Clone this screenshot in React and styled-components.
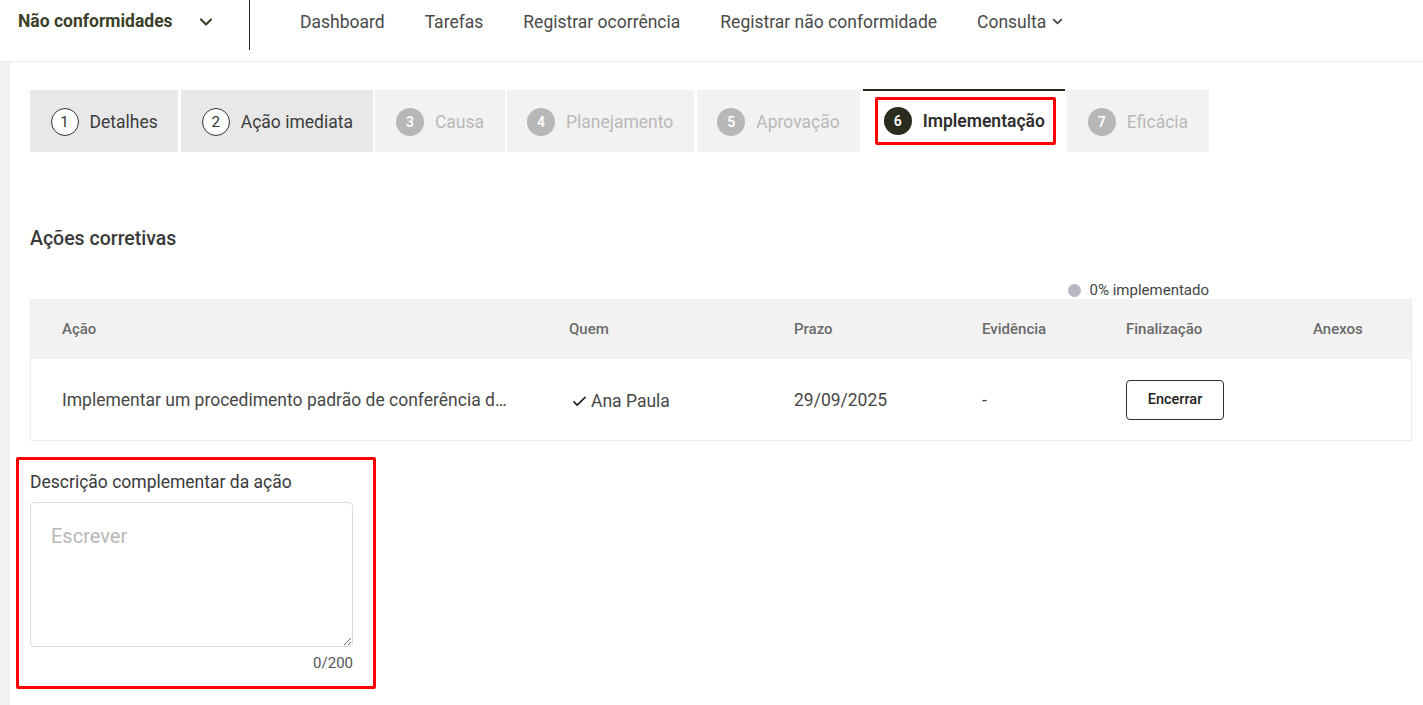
import React from 'react'
import styled, { createGlobalStyle } from 'styled-components'

const GlobalStyle = createGlobalStyle`
    * { box-sizing: border-box; }
    body {
        margin: 0;
        font-family: Roboto, "Liberation Sans", sans-serif;
        background: #ffffff;
        color: #444;
    }
`

const Header = styled.header`
    height: 62px;
    display: flex;
    align-items: flex-start;
    border-bottom: 1px solid #ededed;
    background: #fff;
`

const Module = styled.div`
    width: 250px;
    height: 50px;
    display: flex;
    align-items: flex-start;
    justify-content: space-between;
    padding: 11px 33px 0 18px;
    border-right: 1px solid #222;
    font-size: 17.5px;
    font-weight: 700;
    color: #3b4128;

    svg { margin-top: 1px; }
`

const Nav = styled.nav`
    display: flex;
    align-items: center;
    height: 43px;
    gap: 40px;
    padding-left: 50px;
`

const NavItem = styled.a`
    font-size: 17.5px;
    color: #4a4a4a;
    display: flex;
    align-items: center;
    gap: 4px;
`

const Body = styled.div`
    display: flex;
    min-height: 643px;
`

const Strip = styled.div`
    width: 10px;
    background: #f1f1f1;
`

const Main = styled.main`
    flex: 1;
    padding: 28px 11px 0 20px;
`

const Steps = styled.div`
    display: flex;
    gap: 2px;
`

const Step = styled.div`
    position: relative;
    height: 62px;
    display: flex;
    align-items: center;
    gap: 11px;
    padding: 1px 20.5px 0;
    margin-right: ${p => p.$wide ? '1px' : '0'};
    background: ${p => p.$active ? '#fff' : p.$done ? '#e8e8e8' : '#f2f2f2'};
    box-shadow: ${p => p.$active ? 'inset 0 2px 0 #262a1c' : 'none'};
    margin-top: ${p => p.$active ? '-1px' : '0'};
    font-size: 17.5px;
    font-weight: ${p => p.$active ? 600 : 400};
    color: ${p => p.$active ? '#2e2e2e' : p.$done ? '#3c3c3c' : '#b9b9b9'};

    &::after {
        content: '';
        display: ${p => p.$active ? 'block' : 'none'};
        position: absolute;
        top: 8px;
        bottom: 6px;
        left: 12px;
        right: 9px;
        border: 3px solid #f00;
        border-radius: 2px;
    }
`

const Circle = styled.span`
    width: 28px;
    height: 28px;
    flex: none;
    border-radius: 50%;
    display: flex;
    align-items: center;
    justify-content: center;
    font-size: ${p => p.$done ? '15px' : '14px'};
    font-weight: ${p => p.$done ? 400 : 600};
    border: ${p => p.$done ? '1px solid #333' : 'none'};
    background: ${p => p.$active ? '#2a2c1e' : p.$done ? '#fff' : '#b7b7b7'};
    color: ${p => p.$done ? '#333' : '#fff'};
`

const SectionTitle = styled.h2`
    margin: 75px 0 0;
    font-size: 19.5px;
    font-weight: 500;
    color: #3a3a3a;
`

const Progress = styled.div`
    display: flex;
    align-items: center;
    gap: 9px;
    width: 1179px;
    justify-content: flex-end;
    margin-top: 32px;
    font-size: 15px;
    color: #444;
    line-height: 17px;
`

const Dot = styled.span`
    width: 13px;
    height: 13px;
    border-radius: 50%;
    background: #b9bac1;
`

const Table = styled.div`
    border: 1px solid #ececec;
    border-top: none;
`

const Row = styled.div`
    display: grid;
    grid-template-columns: 507px 225px 188px 144px 187px 1fr;
    align-items: center;
    padding-left: 31px;
    height: ${p => p.$head ? '60px' : '81px'};
    background: ${p => p.$head ? '#f2f2f2' : '#fff'};
    font-size: ${p => p.$head ? '15px' : '17.5px'};
    font-weight: ${p => p.$head ? 500 : 400};
    color: ${p => p.$head ? '#6a6a6a' : '#474747'};
`

const Cell = styled.div`
    display: flex;
    align-items: center;
    gap: 4px;
    white-space: nowrap;
    padding-top: ${p => p.$low ? '3px' : '0'};

    svg { margin-left: 3px; flex: none; }
`

const Clip = styled.span`
    display: block;
    max-width: 448px;
    overflow: hidden;
    text-overflow: ellipsis;
`

const Button = styled.button`
    width: 98px;
    height: 40px;
    border: 1px solid #2d2d2d;
    border-radius: 4px;
    background: #fff;
    font-family: inherit;
    font-size: 14.5px;
    font-weight: 500;
    color: #222;
`

const Field = styled.section`
    width: 360px;
    margin: 16px 0 0 -14px;
    padding: 12px 20px 14px 11px;
    border: 3px solid #f00;
    border-radius: 2px;
`

const Label = styled.label`
    display: block;
    font-size: 17.5px;
    color: #3a3a3a;
    margin-bottom: 10px;
`

const TextArea = styled.textarea`
    display: block;
    width: 323px;
    height: 145px;
    border: 1px solid #dcdcdc;
    border-radius: 4px;
    padding: 21px 20px;
    font-family: inherit;
    font-size: 20px;
    color: #333;
    resize: vertical;
    &::placeholder { color: #b8b8b8; }
`

const Counter = styled.div`
    width: 323px;
    text-align: right;
    margin-top: 7px;
    font-size: 15px;
    color: #555;
`

const Chevron = ({ size = 16, width = 2.4 }) => (
    <svg width={size} height={size} viewBox="0 0 24 24" fill="none" stroke="currentColor" strokeWidth={width} strokeLinecap="round" strokeLinejoin="round">
        <path d="M6 9l6 6 6-6" />
    </svg>
)

const Tick = () => (
    <svg width="15" height="13" viewBox="0 0 16 14" fill="none" stroke="#222" strokeWidth="1.8" strokeLinecap="round" strokeLinejoin="round">
        <path d="M2 7.5l3.5 3.5L14 2.5" />
    </svg>
)

const steps = [
    { n: 1, label: 'Detalhes', done: true },
    { n: 2, label: 'Ação imediata', done: true },
    { n: 3, label: 'Causa' },
    { n: 4, label: 'Planejamento' },
    { n: 5, label: 'Aprovação' },
    { n: 6, label: 'Implementação', active: true },
    { n: 7, label: 'Eficácia' },
]

const App = () => {
    return (
        <>
            <GlobalStyle />
            <Header>
                <Module>
                    Não conformidades
                    <Chevron size={20} width={2.6} />
                </Module>
                <Nav>
                    <NavItem>Dashboard</NavItem>
                    <NavItem>Tarefas</NavItem>
                    <NavItem>Registrar ocorrência</NavItem>
                    <NavItem>Registrar não conformidade</NavItem>
                    <NavItem>Consulta <Chevron size={15} width={3} /></NavItem>
                </Nav>
            </Header>
            <Body>
                <Strip />
                <Main>
                    <Steps>
                        {steps.map(s => (
                            <Step key={s.n} $done={s.done} $active={s.active} $wide={s.n === 1 || s.n === 4 || s.n === 5}>
                                <Circle $done={s.done} $active={s.active}>{s.n}</Circle>
                                {s.label}
                            </Step>
                        ))}
                    </Steps>

                    <SectionTitle>Ações corretivas</SectionTitle>
                    <Progress><Dot />0% implementado</Progress>

                    <Table>
                        <Row $head>
                            <Cell>Ação</Cell>
                            <Cell>Quem</Cell>
                            <Cell>Prazo</Cell>
                            <Cell>Evidência</Cell>
                            <Cell>Finalização</Cell>
                            <Cell>Anexos</Cell>
                        </Row>
                        <Row>
                            <Cell><Clip>Implementar um procedimento padrão de conferência de documentos</Clip></Cell>
                            <Cell $low><Tick /><span>Ana Paula</span></Cell>
                            <Cell>29/09/2025</Cell>
                            <Cell>-</Cell>
                            <Cell><Button>Encerrar</Button></Cell>
                            <Cell />
                        </Row>
                    </Table>

                    <Field>
                        <Label>Descrição complementar da ação</Label>
                        <TextArea placeholder="Escrever" />
                        <Counter>0/200</Counter>
                    </Field>
                </Main>
            </Body>
        </>
    )
}

export default App
